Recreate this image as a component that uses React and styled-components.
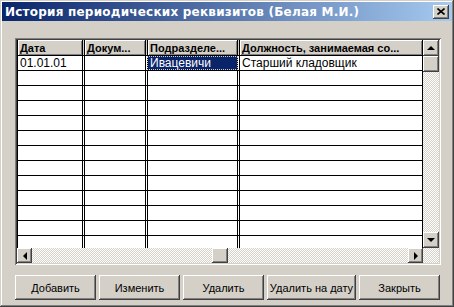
import React from 'react';
import styled, { createGlobalStyle, css } from 'styled-components';

const GlobalStyle = createGlobalStyle`
  html, body {
    margin: 0;
    padding: 0;
    background: #d4d0c8;
  }
  * { box-sizing: border-box; }
`;

const raised = css`
  box-shadow:
    inset -1px -1px #404040,
    inset 1px 1px #ffffff,
    inset -2px -2px #808080,
    inset 2px 2px #d4d0c8;
`;

const checker = css`
  background: repeating-conic-gradient(#ffffff 0 25%, #d4d0c8 0 50%) 0 0 / 2px 2px;
`;

const Window = styled.div`
  width: 454px;
  height: 307px;
  padding: 2px;
  background: #d4d0c8;
  box-shadow:
    inset -1px -1px #404040,
    inset 1px 1px #d4d0c8,
    inset -2px -2px #808080,
    inset 2px 2px #ffffff;
  display: flex;
  flex-direction: column;
`;

const TitleBar = styled.div`
  height: 19px;
  display: flex;
  align-items: center;
  justify-content: space-between;
  padding: 0 3px 0 3px;
  background: linear-gradient(to right, #0a246a, #a6caf0);
`;

const Title = styled.span`
  color: #ffffff;
  font-family: "DejaVu Sans", sans-serif;
  font-weight: bold;
  font-size: 12px;
  letter-spacing: 0.22px;
  white-space: nowrap;
`;

const CloseButton = styled.div`
  width: 16px;
  height: 14px;
  background: #d4d0c8;
  display: flex;
  align-items: center;
  justify-content: center;
  ${raised}
`;

const Content = styled.div`
  flex: 1;
  padding: 17px 0 0 13px;
  display: flex;
  flex-direction: column;
`;

const GridFrame = styled.div`
  width: 426px;
  height: 227px;
  padding: 2px;
  display: flex;
  flex-direction: column;
  background: #ffffff;
  box-shadow:
    inset 1px 1px #808080,
    inset -1px -1px #ffffff,
    inset 2px 2px #404040,
    inset -2px -2px #d4d0c8;
`;

const GridMain = styled.div`
  flex: 1;
  display: flex;
  min-height: 0;
`;

const Table = styled.div`
  width: 406px;
  overflow: hidden;
  background: #ffffff;
`;

const Row = styled.div`
  display: flex;
  gap: 1px;
  height: ${(p) => (p.$header ? 16 : 15)}px;
  background: ${(p) => (p.$header ? '#d4d0c8' : '#ffffff')};
  border-bottom: 1px solid #000000;
`;

const Cell = styled.div`
  width: ${(p) => p.$w}px;
  flex: none;
  border-left: 1px solid #000000;
  border-right: 1px solid #000000;
  padding: 0 2px;
  display: flex;
  align-items: center;
  white-space: nowrap;
  overflow: hidden;
  font-family: "Liberation Sans", Arial, sans-serif;
  font-size: 12px;
  color: #000000;
  ${(p) =>
    p.$selected &&
    css`
      background: #0a246a;
      color: #ffffff;
      outline: 1px dotted #d4d0c8;
      outline-offset: -1px;
    `}
`;

const HeadCell = styled(Cell)`
  background: #d4d0c8;
  font-weight: bold;
  font-size: 11px;
  box-shadow: inset 1px 1px #ffffff, inset -1px -1px #808080;
`;

const VScroll = styled.div`
  width: 16px;
  display: flex;
  flex-direction: column;
  justify-content: space-between;
  ${checker}
`;

const HScrollRow = styled.div`
  height: 15px;
  display: flex;
  ${checker}
`;

const HScroll = styled.div`
  width: 406px;
  display: flex;
  justify-content: space-between;
`;

const ScrollBtn = styled.div`
  width: ${(p) => p.$w}px;
  height: ${(p) => p.$h}px;
  background: #d4d0c8;
  display: flex;
  align-items: center;
  justify-content: center;
  flex: none;
  ${raised}
`;

const VStack = styled.div`
  display: flex;
  flex-direction: column;
`;

const HThumbTrack = styled.div`
  flex: 1;
  display: flex;
  padding-left: 180px;
`;

const Arrow = styled.span`
  width: 0;
  height: 0;
  border: 4px solid transparent;
  ${(p) => p.$dir === 'up' && css`border-bottom-color: #000; border-top-width: 0;`}
  ${(p) => p.$dir === 'down' && css`border-top-color: #000; border-bottom-width: 0;`}
  ${(p) => p.$dir === 'left' && css`border-right-color: #000; border-left-width: 0;`}
  ${(p) => p.$dir === 'right' && css`border-left-color: #000; border-right-width: 0;`}
`;

const Buttons = styled.div`
  display: flex;
  gap: 3px;
  margin-top: 10px;
`;

const Button = styled.div`
  width: ${(p) => p.$w}px;
  height: 25px;
  display: flex;
  align-items: center;
  justify-content: center;
  font-family: "Liberation Sans", Arial, sans-serif;
  font-size: 11px;
  color: #000000;
  background: #d4d0c8;
  ${raised}
`;

const columns = [66, 62, 91, 184];
const headers = ['Дата', 'Докум...', 'Подразделе...', 'Должность, занимаемая со...'];
const firstRow = ['01.01.01', '', 'Ивацевичи', 'Старший кладовщик'];
const emptyRows = Array.from({ length: 12 });

const buttons = [
  ['Добавить', 81],
  ['Изменить', 81],
  ['Удалить', 81],
  ['Удалить на дату', 89],
  ['Закрыть', 81],
];

export default function App() {
  return (
    <>
      <GlobalStyle />
      <Window>
        <TitleBar>
          <Title>История периодических реквизитов (Белая М.И.)</Title>
          <CloseButton>
            <svg width="8" height="7" viewBox="0 0 8 7">
              <path d="M0.5 0.5 L7.5 6.5 M7.5 0.5 L0.5 6.5" stroke="#000" strokeWidth="1.6" />
            </svg>
          </CloseButton>
        </TitleBar>
        <Content>
          <GridFrame>
            <GridMain>
              <Table>
                <Row $header>
                  {headers.map((h, i) => (
                    <HeadCell key={h} $w={columns[i]}>{h}</HeadCell>
                  ))}
                </Row>
                <Row>
                  {firstRow.map((v, i) => (
                    <Cell key={i} $w={columns[i]} $selected={i === 2}>{v}</Cell>
                  ))}
                </Row>
                {emptyRows.map((_, r) => (
                  <Row key={r}>
                    {columns.map((w, i) => (
                      <Cell key={i} $w={w} />
                    ))}
                  </Row>
                ))}
              </Table>
              <VScroll>
                <VStack>
                  <ScrollBtn $w={16} $h={16}><Arrow $dir="up" /></ScrollBtn>
                  <ScrollBtn $w={16} $h={16} />
                </VStack>
                <ScrollBtn $w={16} $h={16}><Arrow $dir="down" /></ScrollBtn>
              </VScroll>
            </GridMain>
            <HScrollRow>
              <HScroll>
                <ScrollBtn $w={15} $h={15}><Arrow $dir="left" /></ScrollBtn>
                <HThumbTrack>
                  <ScrollBtn $w={16} $h={15} />
                </HThumbTrack>
                <ScrollBtn $w={15} $h={15}><Arrow $dir="right" /></ScrollBtn>
              </HScroll>
            </HScrollRow>
          </GridFrame>
          <Buttons>
            {buttons.map(([label, w]) => (
              <Button key={label} $w={w}>{label}</Button>
            ))}
          </Buttons>
        </Content>
      </Window>
    </>
  );
}
